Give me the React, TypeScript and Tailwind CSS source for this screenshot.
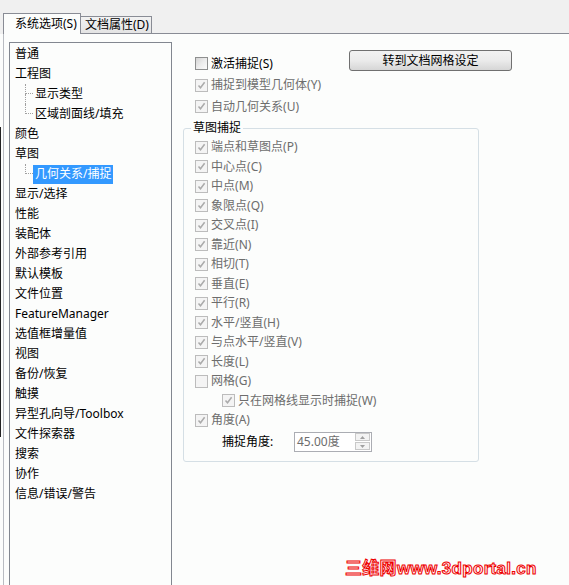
import clsx from 'clsx';

const font = "font-['Noto_Sans','Noto_Sans_CJK_SC',sans-serif]";

type TreeNode = { label: string; children?: string[]; selected?: string };

const tree: TreeNode[] = [
  { label: '普通' },
  { label: '工程图', children: ['显示类型', '区域剖面线/填充'] },
  { label: '颜色' },
  { label: '草图', children: ['几何关系/捕捉'], selected: '几何关系/捕捉' },
  { label: '显示/选择' },
  { label: '性能' },
  { label: '装配体' },
  { label: '外部参考引用' },
  { label: '默认模板' },
  { label: '文件位置' },
  { label: 'FeatureManager' },
  { label: '选值框增量值' },
  { label: '视图' },
  { label: '备份/恢复' },
  { label: '触摸' },
  { label: '异型孔向导/Toolbox' },
  { label: '文件探索器' },
  { label: '搜索' },
  { label: '协作' },
  { label: '信息/错误/警告' },
];

const snaps: { label: string; key: string; checked: boolean; indent?: boolean }[] = [
  { label: '端点和草图点', key: 'P', checked: true },
  { label: '中心点', key: 'C', checked: true },
  { label: '中点', key: 'M', checked: true },
  { label: '象限点', key: 'Q', checked: true },
  { label: '交叉点', key: 'I', checked: true },
  { label: '靠近', key: 'N', checked: true },
  { label: '相切', key: 'T', checked: true },
  { label: '垂直', key: 'E', checked: true },
  { label: '平行', key: 'R', checked: true },
  { label: '水平/竖直', key: 'H', checked: true },
  { label: '与点水平/竖直', key: 'V', checked: true },
  { label: '长度', key: 'L', checked: true },
  { label: '网格', key: 'G', checked: false },
  { label: '只在网格线显示时捕捉', key: 'W', checked: true, indent: true },
  { label: '角度', key: 'A', checked: true },
];

function Box({ checked, disabled }: { checked: boolean; disabled?: boolean }) {
  return (
    <span
      className={clsx(
        'flex size-[13px] shrink-0 items-center justify-center border',
        disabled
          ? 'border-[#bcbcbc] bg-[#f4f4f4]'
          : 'border-[#8e8f8f] bg-gradient-to-br from-[#d4d4d4] via-[#ececec] to-[#fbfbfb]'
      )}
    >
      {checked && (
        <svg viewBox="0 0 11 11" className="size-[11px]" fill="none">
          <path d="M2.5 5.5 4.5 7.8 8.6 2.3" stroke="#aaaaaa" strokeWidth="1.5" />
        </svg>
      )}
    </span>
  );
}

function Check({
  label,
  hotkey,
  checked,
  disabled,
  className,
}: {
  label: string;
  hotkey: string;
  checked: boolean;
  disabled?: boolean;
  className?: string;
}) {
  return (
    <div className={clsx('flex items-center gap-[3px]', className)}>
      <Box checked={checked} disabled={disabled} />
      <span className={clsx('whitespace-nowrap', disabled ? 'text-[#6d6d6d]' : 'text-black')}>
        {label}({hotkey})
      </span>
    </div>
  );
}

function TreeRow({ label }: { label: string }) {
  return <div className="flex h-[20px] items-center pl-[5px]">{label}</div>;
}

function TreeChild({ label, last, selected }: { label: string; last: boolean; selected: boolean }) {
  return (
    <div className="flex h-[20px] items-stretch pl-[15px]">
      <div className="flex w-[8px] flex-col">
        <span className="h-[10px] border-b border-l border-dotted border-[#a0a0a0]" />
        <span className={clsx('h-[10px]', !last && 'border-l border-dotted border-[#a0a0a0]')} />
      </div>
      <div className="flex items-center">
        <span
          className={clsx(
            'flex h-[19px] items-center px-[2px]',
            selected ? 'bg-[#3399ff] text-white' : 'text-black'
          )}
        >
          {label}
        </span>
      </div>
    </div>
  );
}

export default function App() {
  return (
    <div className={clsx('relative flex h-[585px] w-[569px] flex-col overflow-hidden bg-[#fcfdfc] text-[12px] leading-[16px] text-black', font)}>
      {/* tab strip */}
      <div className="flex h-[34px] shrink-0 items-end bg-[#f0f0f0] pl-[3px]">
        <div className="flex h-[21px] w-[78px] items-center border border-b-0 border-[#898c95] bg-[#fcfdfc] pl-[11px]">
          系统选项(S)
        </div>
        <div className="flex h-[18px] w-[71px] items-center border border-l-0 border-[#898c95] bg-gradient-to-b from-[#f2f2f2] to-[#e4e4e4] pl-[4px]">
          文档属性(D)
        </div>
        <div className="h-px flex-1 self-end bg-[#898c95]" />
      </div>

      {/* body */}
      <div className="flex min-h-0 flex-1 border-l border-[#b9bcc2] ml-[3px]">
        {/* option tree */}
        <div className="flex w-[168px] shrink-0 pl-[5px] pt-[8px]">
          <div className="w-[163px] border border-b-0 border-[#828790] bg-[#fcfdfc] pt-px">
            {tree.map((n) => (
              <div key={n.label}>
                <TreeRow label={n.label} />
                {n.children?.map((c, i) => (
                  <TreeChild
                    key={c}
                    label={c}
                    last={i === n.children!.length - 1}
                    selected={n.selected === c}
                  />
                ))}
              </div>
            ))}
          </div>
        </div>

        {/* options */}
        <div className="flex flex-col pl-[11px] pt-[16px]">
          <div className="flex items-start pl-[12px]">
            <Check label="激活捕捉" hotkey="S" checked={false} className="mt-[3px] h-[21.5px] w-[154px]" />
            <button className="flex h-[21px] w-[163px] items-center justify-center rounded-[3px] border border-[#707070] bg-gradient-to-b from-[#f2f2f2] via-[#ebebeb] to-[#d6d6d6] text-[12px] text-black">
              转到文档网格设定
            </button>
          </div>
          <Check label="捕捉到模型几何体" hotkey="Y" checked disabled className="h-[21.5px] pl-[12px]" />
          <Check label="自动几何关系" hotkey="U" checked disabled className="h-[21.5px] pl-[12px]" />

          <div className="relative mt-[10px] w-[296px] rounded-[3px] border border-[#d5dfe5] pb-[9px] pl-[11px] pt-[9px]">
            <span className="absolute -top-[9px] left-[7px] bg-[#fcfdfc] px-[2px] text-black">草图捕捉</span>
            {snaps.map((s) => (
              <Check
                key={s.key}
                label={s.label}
                hotkey={s.key}
                checked={s.checked}
                disabled
                className={clsx('h-[19.5px]', s.indent && 'pl-[27px]')}
              />
            ))}
            <div className="mt-[1.5px] flex h-[20px] items-center pl-[27px]">
              <span className="w-[72px] text-black">捕捉角度:</span>
              <div className="flex h-[20px] w-[78px] items-center border border-[#abadb3] bg-white pl-[2px]">
                <span className="flex-1 text-[#6d6d6d]">45.00度</span>
                <div className="mr-px flex flex-col gap-px">
                  <span className="flex h-[8px] w-[15px] items-center justify-center border border-[#c9c9c9] bg-[#f3f3f3]">
                    <svg viewBox="0 0 5 3" className="h-[3px] w-[5px]"><path d="M0 3 2.5 0 5 3Z" fill="#a0a0a0" /></svg>
                  </span>
                  <span className="flex h-[8px] w-[15px] items-center justify-center border border-[#c9c9c9] bg-[#f3f3f3]">
                    <svg viewBox="0 0 5 3" className="h-[3px] w-[5px]"><path d="M0 0 2.5 3 5 0Z" fill="#a0a0a0" /></svg>
                  </span>
                </div>
              </div>
            </div>
          </div>
        </div>
      </div>

      {/* window edge artifact */}
      <div className="absolute left-0 top-[127px] h-[310px] w-px bg-[#222]" />

      {/* watermark */}
      <div className="absolute left-[345px] top-[559px] whitespace-nowrap text-[17px] font-bold leading-[20px] tracking-[0.3px] text-[#fff4f4] [-webkit-text-stroke:1px_#ee0000] font-['Liberation_Sans','Noto_Sans_CJK_SC',sans-serif]">
        三维网www.3dportal.cn
      </div>
    </div>
  );
}
